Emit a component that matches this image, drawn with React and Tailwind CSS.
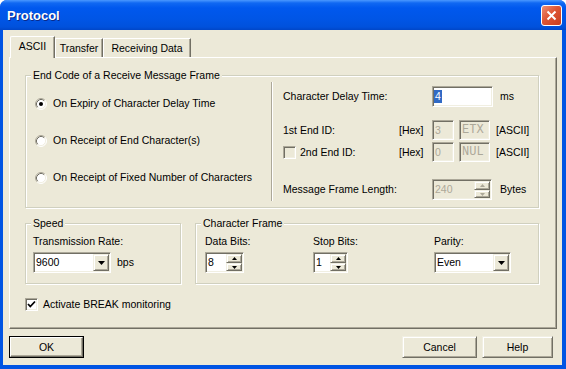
import React from 'react'

const sunken = 'border border-t-[#ACA899] border-l-[#ACA899] border-b-white border-r-white shadow-[inset_1px_1px_0_#716F64,inset_-1px_-1px_0_#F1EFE2]'
const raised = 'border border-t-[#F1EFE2] border-l-[#F1EFE2] border-b-[#716F64] border-r-[#716F64] shadow-[inset_1px_1px_0_#fff,inset_-1px_-1px_0_#ACA899] bg-[#ECE9D8]'
const etched = 'border border-[#D0D0BF] shadow-[inset_1px_1px_0_#fff,1px_1px_0_#fff]'

const Radio = ({ checked }) => (
    <svg width="12" height="12" viewBox="0 0 12 12">
        <circle cx="6" cy="6" r="5" fill="white" />
        <path d="M2.11 9.89 A5.5 5.5 0 0 1 9.89 2.11" stroke="#ACA899" fill="none" />
        <path d="M9.89 2.11 A5.5 5.5 0 0 1 2.11 9.89" stroke="#FFFFFF" fill="none" />
        <path d="M2.82 9.18 A4.5 4.5 0 0 1 9.18 2.82" stroke="#716F64" fill="none" />
        <path d="M9.18 2.82 A4.5 4.5 0 0 1 2.82 9.18" stroke="#F1EFE2" fill="none" />
        {checked && <circle cx="6" cy="6" r="2" fill="black" />}
    </svg>
)

const Checkbox = ({ checked, disabled }) => (
    <div className={`w-[13px] h-[13px] flex items-center justify-center ${sunken} ${disabled ? 'bg-[#ECE9D8]' : 'bg-white'}`}>
        {checked && (
            <svg width="9" height="9" viewBox="0 0 9 9">
                <path d="M1 4 L3.3 6.5 L8 1.5" stroke="black" strokeWidth="1.8" fill="none" />
            </svg>
        )}
    </div>
)

const Arrow = ({ up, small, color = 'black' }) => (
    small ? (
        <svg width="5" height="3" viewBox="0 0 5 3">
            <path d={up ? 'M2.5 0 L5 3 L0 3 Z' : 'M0 0 L5 0 L2.5 3 Z'} fill={color} />
        </svg>
    ) : (
        <svg width="7" height="4" viewBox="0 0 7 4">
            <path d="M0 0 L7 0 L3.5 4 Z" fill={color} />
        </svg>
    )
)

const Spin = ({ value, width, disabled }) => (
    <div className={`flex items-center h-[21px] ${sunken} ${disabled ? 'bg-[#ECE9D8] text-[#ACA899]' : 'bg-white'}`} style={{ width }}>
        <span className="pl-[2px] flex-1">{value}</span>
        <div className="flex flex-col w-[16px] h-[17px] mr-[1px]">
            <div className={`h-[9px] flex items-center justify-center ${raised}`}><Arrow up small color={disabled ? '#ACA899' : 'black'} /></div>
            <div className={`h-[8px] flex items-center justify-center ${raised}`}><Arrow small color={disabled ? '#ACA899' : 'black'} /></div>
        </div>
    </div>
)

const Combo = ({ value, width }) => (
    <div className={`flex items-center h-[21px] bg-white ${sunken}`} style={{ width }}>
        <span className="pl-[2px] flex-1">{value}</span>
        <div className={`w-[16px] h-[17px] mr-[1px] flex items-center justify-center ${raised}`}><Arrow /></div>
    </div>
)

const Group = ({ label, className, children }) => (
    <div className={`relative ${etched} ${className}`}>
        <span className="absolute -top-[7px] left-[5px] px-[2px] bg-[#ECE9D8] leading-[13px]">{label}</span>
        {children}
    </div>
)

const Button = ({ children, className }) => (
    <div className={`h-[22px] flex items-center justify-center ${raised} ${className}`}>{children}</div>
)

const App = () => {
    return (
        <div className="w-[566px] h-[369px] bg-white font-['Liberation_Sans',Arial,sans-serif] text-[10.5px] leading-[13px] text-black">
            <div className="w-full h-full flex flex-col rounded-t-[7px] overflow-hidden bg-[#0054E3]">

                {/* title bar */}
                <div className="h-[30px] flex items-center justify-between pl-[7px] pr-[4px] bg-[linear-gradient(180deg,#4A98FF_0px,#1068F2_3px,#0058EE_8px,#0055E5_20px,#0051DC_27px,#0046C8_30px)]">
                    <span className="text-white font-bold text-[13px] pt-[1px] [text-shadow:1px_1px_#0A2A8A]">Protocol</span>
                    <div className="w-[21px] h-[21px] rounded-[3px] border border-white bg-[linear-gradient(135deg,#EE8F74,#DE5534_45%,#C83D1F)] flex items-center justify-center">
                        <svg width="11" height="11" viewBox="0 0 11 11">
                            <path d="M1.5 1.5 L9.5 9.5 M9.5 1.5 L1.5 9.5" stroke="white" strokeWidth="2" />
                        </svg>
                    </div>
                </div>

                <div className="flex-1 ml-[3px] mr-[4px] mb-[4px] bg-[#ECE9D8] flex flex-col pl-[6px] pr-[5px] pt-[6px]">

                    {/* tabs */}
                    <div className="flex items-end h-[21px] pl-[1px]">
                        <div className="relative z-10 -mb-[1px] h-[22px] w-[45px] bg-[#ECE9D8] border-t border-l border-r border-t-white border-l-white border-r-[#716F64] rounded-tl-[2px] shadow-[inset_-1px_0_0_#ACA899] flex justify-center pt-[3px]">ASCII</div>
                        <div className="h-[19px] w-[48px] border-t border-l border-r border-t-white border-l-white border-r-[#716F64] shadow-[inset_-1px_0_0_#ACA899] flex justify-center pt-[3px]">Transfer</div>
                        <div className="h-[19px] w-[88px] border-t border-l border-r border-t-white border-l-white border-r-[#716F64] shadow-[inset_-1px_0_0_#ACA899] flex justify-center pt-[3px]">Receiving Data</div>
                    </div>

                    {/* tab panel */}
                    <div className="h-[272px] border border-t-white border-l-white border-r-[#716F64] border-b-[#716F64] shadow-[inset_-1px_-1px_0_#ACA899] pl-[15px] pt-[17px]">

                        <Group label="End Code of a Receive Message Frame" className="w-[514px] h-[133px] flex">
                            <div className="w-[245px] flex flex-col pl-[9px] pt-[21px] gap-[24px]">
                                <div className="flex items-center h-[13px]"><Radio checked /><span className="ml-[6px]">On Expiry of Character Delay Time</span></div>
                                <div className="flex items-center h-[13px]"><Radio /><span className="ml-[6px]">On Receipt of End Character(s)</span></div>
                                <div className="flex items-center h-[13px]"><Radio /><span className="ml-[6px]">On Receipt of Fixed Number of Characters</span></div>
                            </div>
                            <div className="my-[6px] w-[2px] border-l border-l-[#ACA899] border-r border-r-white" />
                            <div className="flex flex-col pl-[10px] pt-[10px]">
                                <div className="flex items-center h-[21px]">
                                    <span className="w-[149px]">Character Delay Time:</span>
                                    <div className={`w-[61px] h-[21px] flex items-center bg-white ${sunken}`}>
                                        <span className="ml-[1px] px-[1px] bg-[#316AC5] text-white">4</span>
                                    </div>
                                    <span className="ml-[7px]">ms</span>
                                </div>
                                <div className="flex items-center h-[20px] mt-[13px]">
                                    <span className="w-[116px]">1st End ID:</span>
                                    <span className="w-[33px]">[Hex]</span>
                                    <div className={`w-[22px] h-[20px] flex items-center pl-[2px] bg-[#ECE9D8] text-[#ACA899] ${sunken}`}>3</div>
                                    <div className={`ml-[5px] w-[31px] h-[20px] flex items-center pl-[2px] bg-[#ECE9D8] text-[#ACA899] text-[12px] font-['Liberation_Mono',monospace] ${sunken}`}>ETX</div>
                                    <span className="ml-[6px]">[ASCII]</span>
                                </div>
                                <div className="flex items-center h-[20px] mt-[2px]">
                                    <div className="w-[116px] flex items-center">
                                        <Checkbox disabled />
                                        <span className="ml-[4px]">2nd End ID:</span>
                                    </div>
                                    <span className="w-[33px]">[Hex]</span>
                                    <div className={`w-[22px] h-[20px] flex items-center pl-[2px] bg-[#ECE9D8] text-[#ACA899] ${sunken}`}>0</div>
                                    <div className={`ml-[5px] w-[31px] h-[20px] flex items-center pl-[2px] bg-[#ECE9D8] text-[#ACA899] text-[12px] font-['Liberation_Mono',monospace] ${sunken}`}>NUL</div>
                                    <span className="ml-[6px]">[ASCII]</span>
                                </div>
                                <div className="flex items-center h-[21px] mt-[17px]">
                                    <span className="w-[149px]">Message Frame Length:</span>
                                    <Spin value="240" width="60px" disabled />
                                    <span className="ml-[8px]">Bytes</span>
                                </div>
                            </div>
                        </Group>

                        <div className="flex mt-[15px]">
                            <Group label="Speed" className="w-[156px] h-[61px] pl-[7px] pt-[11px]">
                                <div>Transmission Rate:</div>
                                <div className="flex items-center mt-[4px]">
                                    <Combo value="9600" width="78px" />
                                    <span className="ml-[6px]">bps</span>
                                </div>
                            </Group>
                            <Group label="Character Frame" className="ml-[14px] w-[344px] h-[61px] pl-[9px] pt-[11px] flex">
                                <div className="w-[108px]">
                                    <div>Data Bits:</div>
                                    <div className="mt-[4px]"><Spin value="8" width="39px" /></div>
                                </div>
                                <div className="w-[121px]">
                                    <div>Stop Bits:</div>
                                    <div className="mt-[4px]"><Spin value="1" width="35px" /></div>
                                </div>
                                <div>
                                    <div>Parity:</div>
                                    <div className="mt-[4px]"><Combo value="Even" width="77px" /></div>
                                </div>
                            </Group>
                        </div>

                        <div className="flex items-center mt-[14px]">
                            <Checkbox checked />
                            <span className="ml-[5px]">Activate BREAK monitoring</span>
                        </div>
                    </div>

                    {/* buttons */}
                    <div className="flex mt-[7px] pr-[4px]">
                        <div className="w-[75px] h-[22px] border border-black">
                            <div className="h-full flex items-center justify-center border border-t-white border-l-white border-b-[#716F64] border-r-[#716F64] shadow-[inset_-1px_-1px_0_#ACA899]">OK</div>
                        </div>
                        <Button className="ml-auto w-[75px]">Cancel</Button>
                        <Button className="ml-[5px] w-[71px]">Help</Button>
                    </div>
                </div>
            </div>
        </div>
    )
}

export default App
